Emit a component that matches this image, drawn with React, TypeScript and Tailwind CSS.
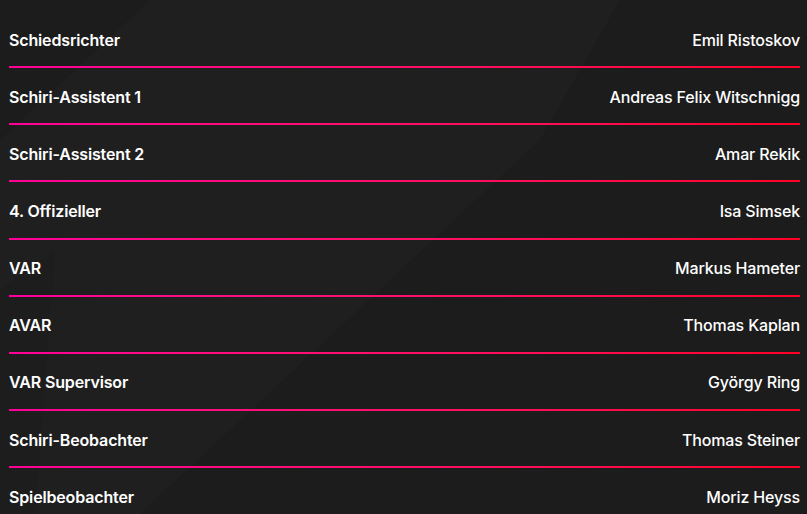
import React from "react";

type Official = {
  role: string;
  name: string;
};

const officials: Official[] = [
  { role: "Schiedsrichter", name: "Emil Ristoskov" },
  { role: "Schiri-Assistent 1", name: "Andreas Felix Witschnigg" },
  { role: "Schiri-Assistent 2", name: "Amar Rekik" },
  { role: "4. Offizieller", name: "Isa Simsek" },
  { role: "VAR", name: "Markus Hameter" },
  { role: "AVAR", name: "Thomas Kaplan" },
  { role: "VAR Supervisor", name: "György Ring" },
  { role: "Schiri-Beobachter", name: "Thomas Steiner" },
  { role: "Spielbeobachter", name: "Moriz Heyss" },
];

const App: React.FC = () => {
  return (
    <div className="relative w-[807px] h-[514px] overflow-hidden bg-[#1c1c1c] font-['Inter',sans-serif] text-white">
      {/* faint background shapes */}
      <svg
        className="absolute inset-0 pointer-events-none"
        width="807"
        height="514"
        viewBox="0 0 807 514"
      >
        <path d="M0 140 L150 0 L620 0 L540 140 L140 514 L0 514 Z" fill="#1f1f1f" />
        <path d="M0 290 L55 250 L35 514 L0 514 Z" fill="#1d1d1d" />
      </svg>

      <div className="relative pt-[11px] pl-[9px] pr-[7px]">
        {officials.map((item, i) => (
          <div key={item.role}>
            <div className="flex justify-between items-center h-[55.15px] pt-[2px] text-[16px] tracking-[-0.15px]">
              <p className="font-semibold">{item.role}</p>
              <p className="font-medium">{item.name}</p>
            </div>
            {i < officials.length - 1 && (
              <div className="h-[2px] bg-linear-to-r from-[#ff0099] to-[#ff0024]"></div>
            )}
          </div>
        ))}
      </div>
    </div>
  );
};

export default App;
